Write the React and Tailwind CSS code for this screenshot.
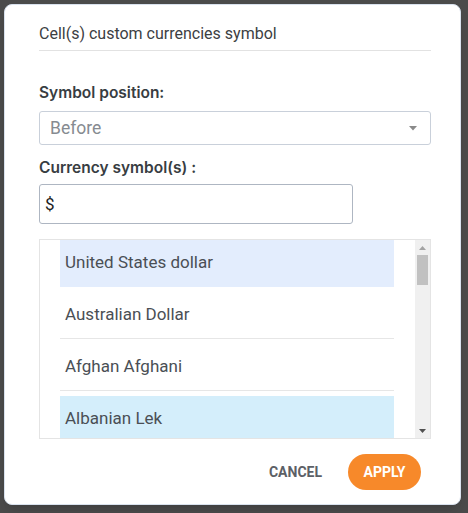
import { useState } from "react";

const currencies = [
  { name: "United States dollar", tone: "bg-[#e3edfd] border-[#e3edfd]" },
  { name: "Australian Dollar", tone: "bg-white border-[#e6e6e6]" },
  { name: "Afghan Afghani", tone: "bg-white border-[#e6e6e6]" },
  { name: "Albanian Lek", tone: "bg-[#d4eefb] border-[#d4eefb]" },
];

export default function App() {
  const [symbol, setSymbol] = useState("$");

  return (
    <div className="relative h-[513px] w-[468px] overflow-hidden bg-[#4b4b4b] font-['Roboto',sans-serif]">
      {/* modal */}
      <div className="absolute left-[4px] top-[4px] flex h-[501px] w-[457px] flex-col rounded-lg border border-[#d9e2ee] bg-white pl-[34px] pr-[29px] pt-[17px] shadow-lg">
        {/* title */}
        <div className="border-b border-[#e2e2e2] pb-[4px] text-[16px] leading-6 text-[#3c4043]">
          Cell(s) custom currencies symbol
        </div>

        <label className="mt-[31px] font-['Inter',sans-serif] text-[15.5px] font-semibold leading-[22px] text-[#383d42]">
          Symbol position:
        </label>
        <div className="mt-[7px] flex h-[34px] items-center justify-between rounded-[3px] border border-[#c9d0da] pl-[10px] pr-[13px]">
          <span className="text-[17.5px] text-[#868b91]">Before</span>
          <svg width="8" height="5" viewBox="0 0 8 5">
            <path d="M0 0h8L4 4.5z" fill="#8a8a8a" />
          </svg>
        </div>

        <label className="mt-[12px] font-['Inter',sans-serif] text-[15.5px] font-semibold leading-[22px] text-[#383d42]">
          Currency symbol(s) :
        </label>
        <input
          value={symbol}
          onChange={(e) => setSymbol(e.target.value)}
          className="mt-[5px] h-[40px] w-[314px] rounded-[3px] border border-[#aeb6c2] px-[5px] text-[17px] text-[#222] outline-none"
        />

        {/* currency list */}
        <div className="mt-[15px] flex h-[200px] border border-[#e4e4e4]">
          <div className="flex-1 overflow-hidden pl-[20px] pr-[21px]">
            <div className="flex flex-col gap-[5px]">
              {currencies.map((c) => (
                <div
                  key={c.name}
                  className={`flex h-[47px] shrink-0 items-center border-b pl-[5px] text-[17px] text-[#4a4f55] ${c.tone}`}
                >
                  {c.name}
                </div>
              ))}
            </div>
          </div>
          {/* scrollbar */}
          <div className="flex w-[15px] flex-col items-center bg-[#f0f0f0] pb-[5px] pt-[6px]">
            <svg width="7" height="4" viewBox="0 0 7 4">
              <path d="M0 4h7L3.5 0z" fill="#a3a3a3" />
            </svg>
            <div className="mt-[5px] h-[30px] w-[11px] bg-[#c1c1c1]" />
            <div className="flex-1" />
            <svg width="7" height="4" viewBox="0 0 7 4">
              <path d="M0 0h7L3.5 4z" fill="#505050" />
            </svg>
          </div>
        </div>

        {/* actions */}
        <div className="mt-[15px] flex items-center justify-end gap-[26px] pr-[10px]">
          <button className="text-[14px] font-bold text-[#5c6066]">CANCEL</button>
          <button className="h-[36px] w-[73px] rounded-full bg-[#f7892a] text-[14px] font-bold text-white">
            APPLY
          </button>
        </div>
      </div>
    </div>
  );
}
